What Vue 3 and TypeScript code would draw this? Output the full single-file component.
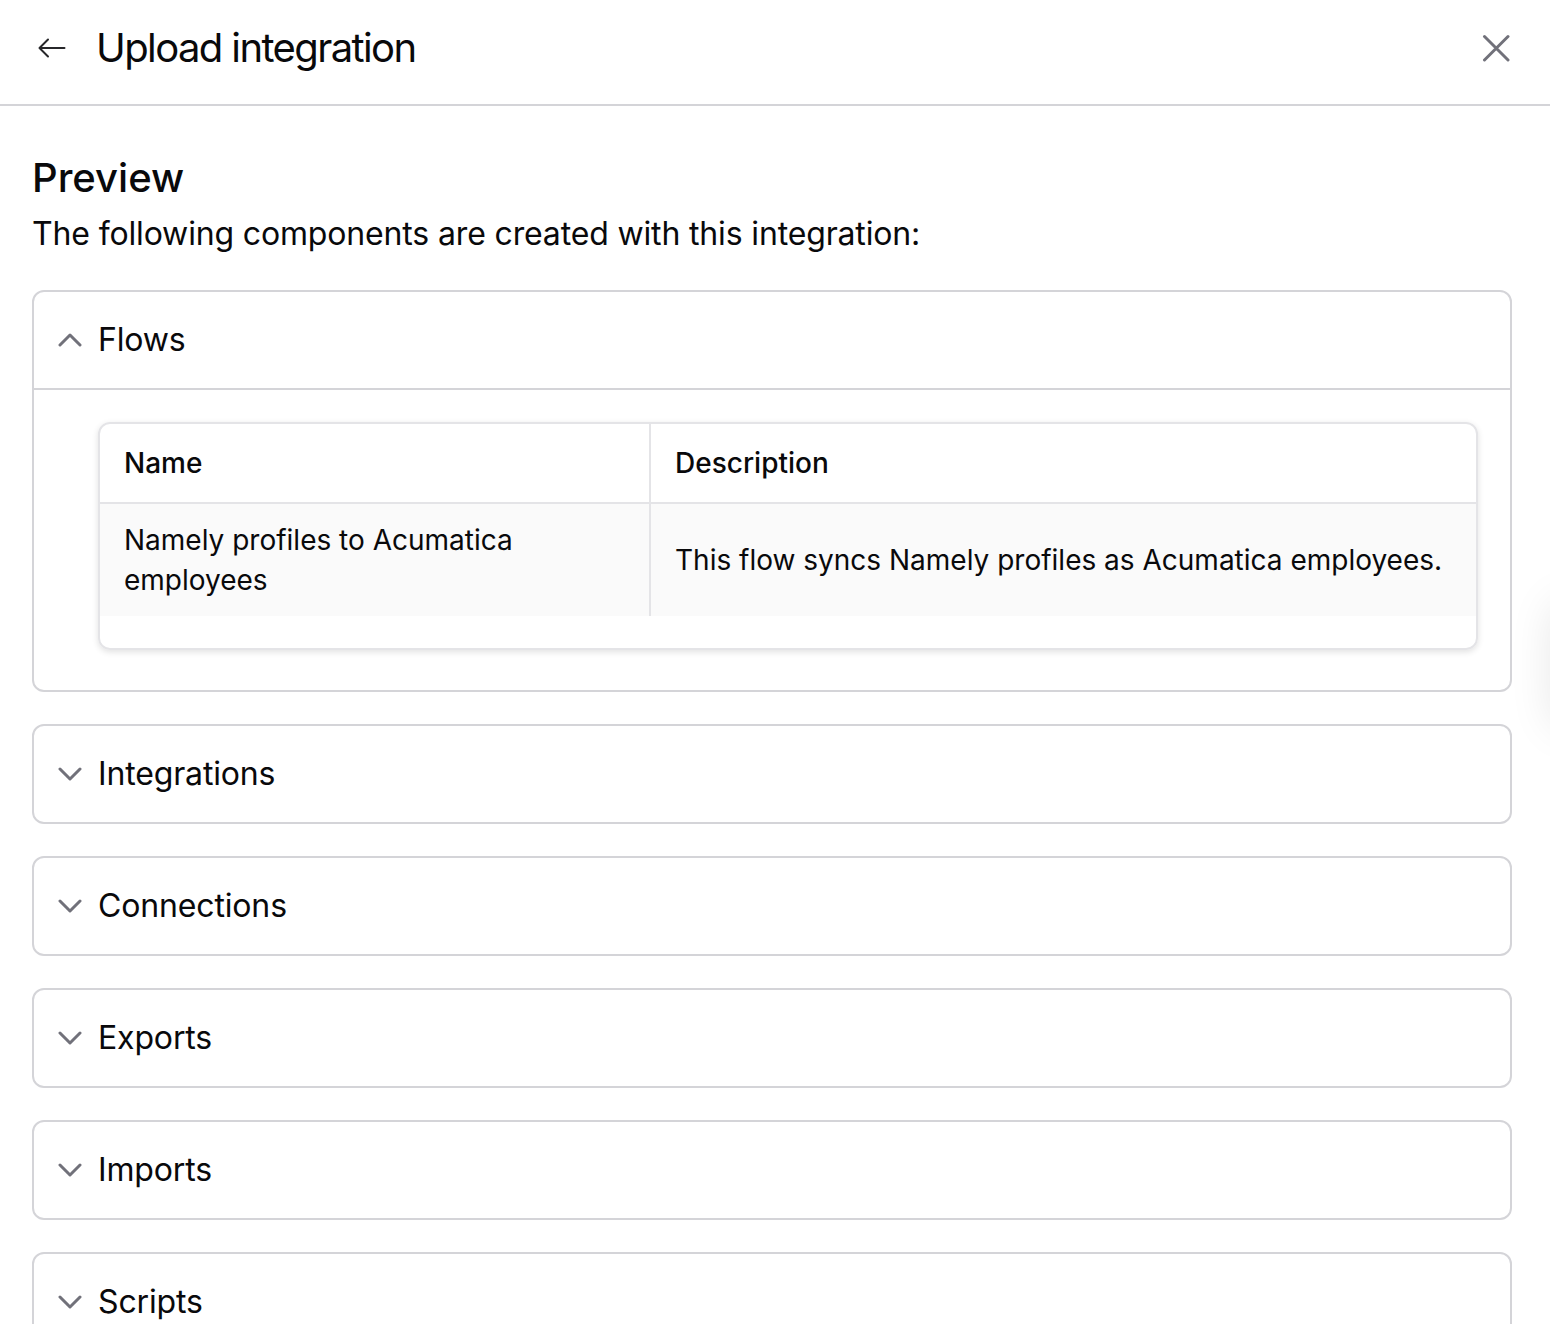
<script setup lang="ts">
import { ref } from 'vue';

interface FlowRow {
    name: string;
    description: string;
}

const collapsedSections = ref<string[]>(['Integrations', 'Connections', 'Exports', 'Imports', 'Scripts']);

const flows: FlowRow[] = [
    {
        name: 'Namely profiles to Acumatica employees',
        description: 'This flow syncs Namely profiles as Acumatica employees.',
    },
];
</script>

<template>
    <div class="page">
        <header class="top-bar">
            <button class="icon-button back-button" type="button" aria-label="Back">
                <svg width="32" height="32" viewBox="0 0 32 32" fill="none">
                    <path d="M28.5 16H3.5M12 7.5 3.5 16l8.5 8.5" stroke="#27272a" stroke-width="2" stroke-linecap="round" stroke-linejoin="round" />
                </svg>
            </button>
            <h1 class="title">Upload integration</h1>
            <button class="icon-button close-button" type="button" aria-label="Close">
                <svg width="28" height="28" viewBox="0 0 28 28" fill="none">
                    <path d="M2.5 2.5l23.5 23.5M26 2.5 2.5 26" stroke="#71717a" stroke-width="3" stroke-linecap="round" />
                </svg>
            </button>
        </header>

        <main class="content">
            <h2 class="heading">Preview</h2>
            <p class="lead">The following components are created with this integration:</p>

            <section class="accordion">
                <div class="accordion-head open">
                    <svg class="chevron" width="24" height="14" viewBox="0 0 24 14" fill="none">
                        <path d="M2 12 12 2l10 10" stroke="#71717a" stroke-width="3" stroke-linecap="round" stroke-linejoin="round" />
                    </svg>
                    <span class="label">Flows</span>
                </div>
                <div class="accordion-body">
                    <div class="table-card">
                        <table class="table">
                            <thead>
                                <tr>
                                    <th class="col-name">Name</th>
                                    <th>Description</th>
                                </tr>
                            </thead>
                            <tbody>
                                <tr v-for="flow in flows" :key="flow.name">
                                    <td class="col-name">{{ flow.name }}</td>
                                    <td>{{ flow.description }}</td>
                                </tr>
                            </tbody>
                        </table>
                    </div>
                </div>
            </section>

            <section v-for="section in collapsedSections" :key="section" class="accordion">
                <div class="accordion-head">
                    <svg class="chevron" width="24" height="14" viewBox="0 0 24 14" fill="none">
                        <path d="M2 2l10 10L22 2" stroke="#71717a" stroke-width="3" stroke-linecap="round" stroke-linejoin="round" />
                    </svg>
                    <span class="label">{{ section }}</span>
                </div>
            </section>
        </main>

        <!-- resto de un panel flotante fuera de la pantalla -->
        <div class="edge-shadow"></div>
    </div>
</template>

<style>
html,
body {
    background: #fff;
}
</style>

<style scoped>
.page {
    position: relative;
    width: 1550px;
    height: 1324px;
    overflow: hidden;
    background: #fff;
    color: #09090b;
    font-family: Inter, "Noto Sans", sans-serif;
}

.top-bar {
    display: flex;
    align-items: center;
    height: 96px;
    padding: 0 40px 8px 36px;
    border-bottom: 2px solid #d4d4d8;
}

.icon-button {
    display: flex;
    padding: 0;
    border: none;
    background: none;
}

.back-button {
    margin-right: 29px;
}

.close-button {
    margin-left: auto;
}

.title {
    margin: 0 0 0 -1px;
    font-size: 40px;
    line-height: 48px;
    font-weight: 400;
    letter-spacing: -1.6px;
}

.content {
    display: flex;
    flex-direction: column;
    gap: 32px;
    padding: 46px 38px 0 32px;
}

.heading {
    margin: 0 0 -32px;
    font-size: 40px;
    line-height: 52px;
    font-weight: 500;
}

.lead {
    margin: 0;
    padding-top: 6px;
    font-size: 32px;
    line-height: 48px;
    letter-spacing: -0.15px;
}

.accordion {
    flex: none;
    border: 2px solid #d4d4d8;
    border-radius: 12px;
}

.accordion-head {
    display: flex;
    align-items: center;
    gap: 16px;
    height: 96px;
    padding-left: 24px;
    font-size: 32px;
    letter-spacing: -0.15px;
}

.accordion-head.open {
    border-bottom: 2px solid #d4d4d8;
}

.label {
    margin-bottom: 2px;
}

.chevron {
    flex: none;
}

.accordion-body {
    padding: 32px 32px 40px 64px;
}

.table-card {
    padding-bottom: 32px;
    border: 2px solid #e4e4e7;
    border-radius: 12px;
    box-shadow: 0 2px 6px rgba(0, 0, 0, 0.12);
}

.table {
    width: 100%;
    border-collapse: collapse;
    table-layout: fixed;
    font-size: 28px;
    line-height: 40px;
}

.table th {
    height: 78px;
    padding: 0 24px;
    text-align: left;
    font-weight: 500;
    border-bottom: 2px solid #e4e4e7;
}

.table td {
    padding: 16px 24px;
    background: #fafafa;
}

.table .col-name {
    box-sizing: border-box;
    width: 550px;
    border-right: 2px solid #e4e4e7;
}

.edge-shadow {
    position: absolute;
    top: 600px;
    left: 1552px;
    width: 40px;
    height: 130px;
    border-radius: 20px;
    background: #fff;
    box-shadow: 0 0 44px rgba(0, 0, 0, 0.1);
}
</style>
